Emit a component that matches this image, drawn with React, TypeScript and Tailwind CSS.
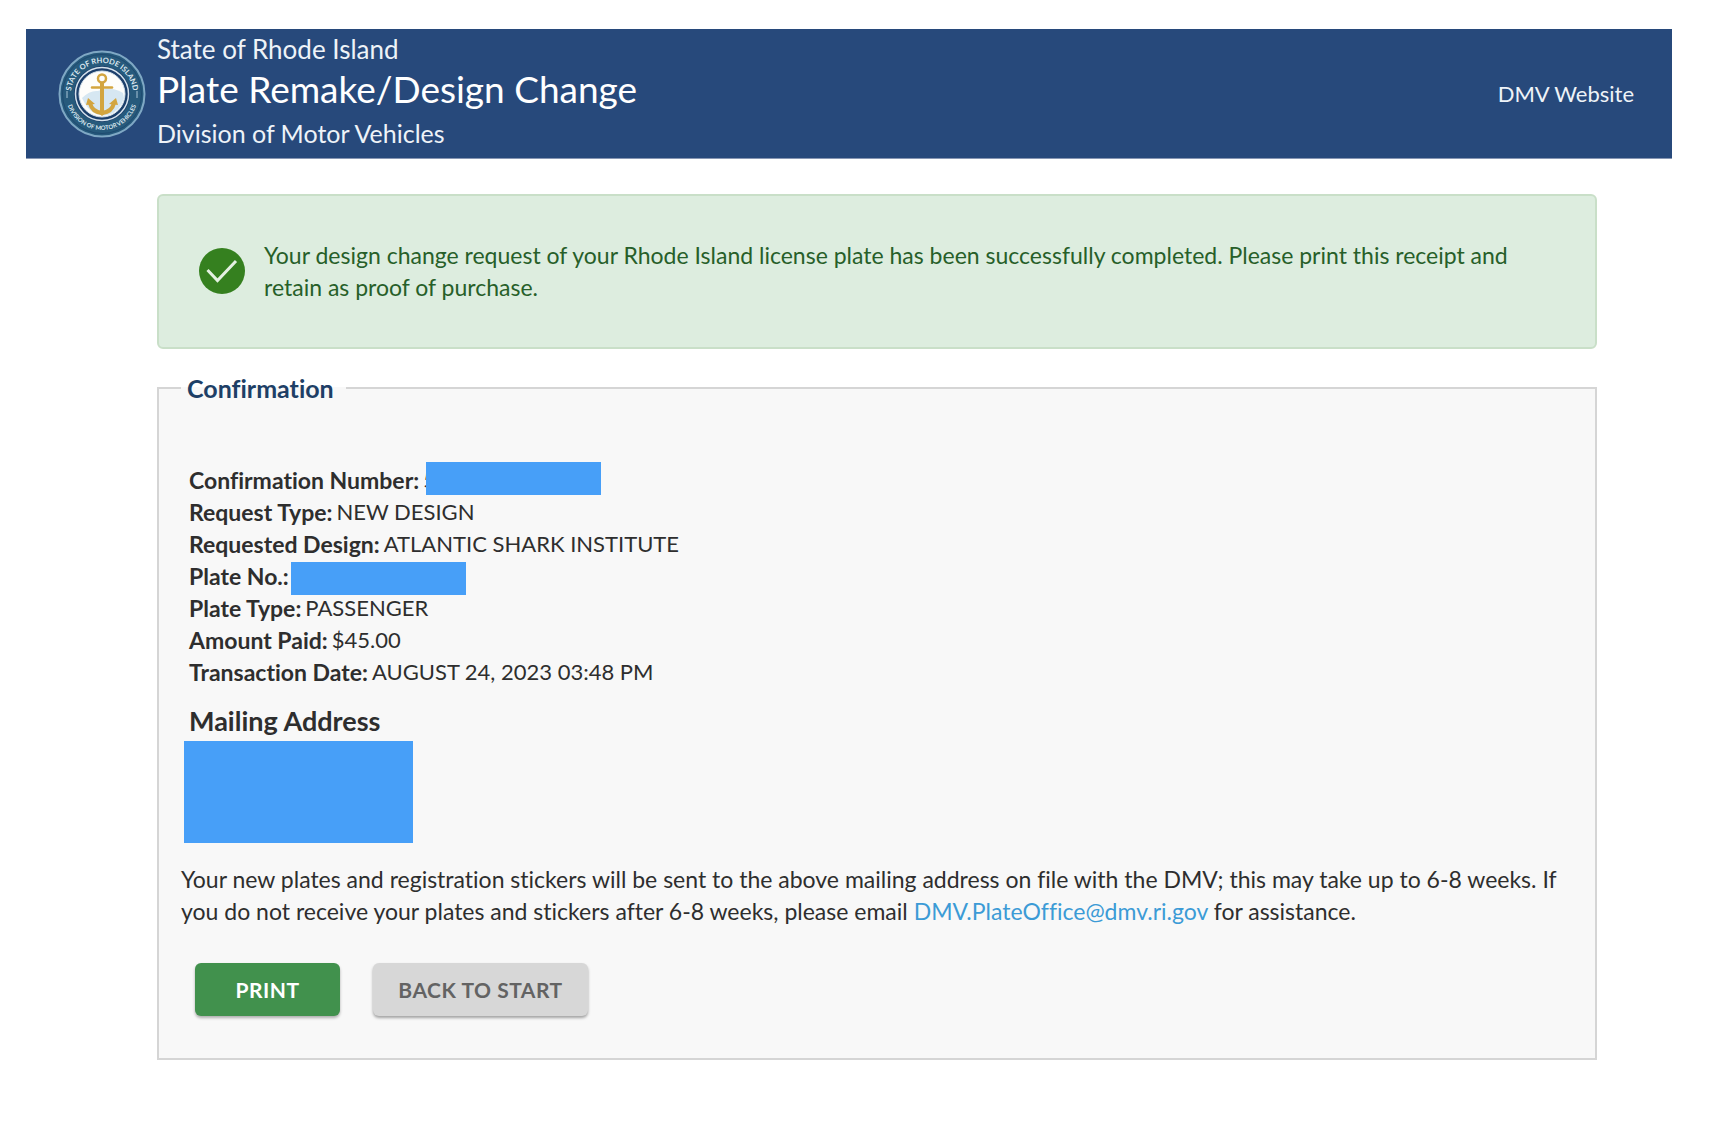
import type { ReactNode } from "react";

const details: { label: string; value: ReactNode }[] = [
  {
    label: "Confirmation Number:",
    value: (
      <>
        5<span className="absolute left-[237px] -top-0.5 h-[33px] w-[175px] bg-[#479ff8]" />
      </>
    ),
  },
  { label: "Request Type:", value: "NEW DESIGN" },
  { label: "Requested Design:", value: "ATLANTIC SHARK INSTITUTE" },
  {
    label: "Plate No.:",
    value: <span className="absolute left-[102px] top-0.5 h-[33px] w-[175px] bg-[#479ff8]" />,
  },
  { label: "Plate Type:", value: "PASSENGER" },
  { label: "Amount Paid:", value: "$45.00" },
  { label: "Transaction Date:", value: "AUGUST 24, 2023 03:48 PM" },
];

function Seal() {
  return (
    <svg viewBox="0 0 88 88" className="size-[88px] shrink-0" role="img" aria-label="Rhode Island DMV seal">
      <defs>
        <path id="seal-top" d="M13 44a31 31 0 0 1 62 0" />
        <path id="seal-bottom" d="M8 44a36 36 0 0 0 72 0" />
      </defs>
      <circle cx="44" cy="44" r="42.500" fill="#275a7c" stroke="#7fa8c4" strokeWidth="2" />
      <circle cx="44" cy="44" r="39.500" fill="none" stroke="#1e4a70" strokeWidth="1" />
      <circle cx="44" cy="44" r="28" fill="#1c3f6b" />
      <circle cx="44" cy="44" r="26.500" fill="none" stroke="#d5e2ec" strokeWidth="1.500" />
      <circle cx="44" cy="44" r="23" fill="#fdfdfb" stroke="#d5e2ec" strokeWidth="1" />
      <path d="M24 48q8-8 16-7 12-6 25 2l1 5q-4 14-16 17-17 3-26-17z" fill="#d6e7f2" />
      <g fill="#dbe7ef" fontFamily="Lato, sans-serif" fontWeight="700" textAnchor="middle">
        <text fontSize="7.500">
          <textPath href="#seal-top" startOffset="50%">STATE OF RHODE ISLAND</textPath>
        </text>
        <text fontSize="6">
          <textPath href="#seal-bottom" startOffset="50%">DIVISION OF MOTOR VEHICLES</textPath>
        </text>
      </g>
      <path d="M9 41v7M79 41v7" stroke="#a9c5d6" strokeWidth="1" />
      <g fill="none" stroke="#d3a53f">
        <circle cx="44" cy="28.500" r="4" strokeWidth="2.500" />
        <path d="M34 37.500h20" strokeWidth="2.500" strokeLinecap="round" />
        <path d="M44 33v29" strokeWidth="4" />
        <path d="M32 53q2 9 12 10 10-1 12-10" strokeWidth="4" />
      </g>
      <path d="M28 55l2-7 7 6zM60 55l-2-7-7 6zM39 62l5 4 5-4z" fill="#d3a53f" />
    </svg>
  );
}

function CheckIcon() {
  return (
    <svg viewBox="0 0 46 46" className="size-[46px] shrink-0" aria-hidden="true">
      <circle cx="23" cy="23" r="23" fill="#35801f" />
      <path d="M8.500 22l10 10.500L37 13" fill="none" stroke="#e4f1e2" strokeWidth="3" />
    </svg>
  );
}

export default function App() {
  return (
    <div className="bg-white pt-[29px] pb-16 pl-[26px] pr-[38px] font-['Lato',sans-serif] text-[23px] leading-8 text-[#2e2e2e] [font-variant-ligatures:none]">
      <header className="flex h-[130px] items-center justify-between border-b border-[#8796b3] bg-[#27497b] pl-8 pr-[38px] text-[#eef3f8]">
        <div className="flex items-center gap-[11px]">
          <Seal />
          <div className="pb-1.5">
            <p className="text-[26px] leading-8">State of Rhode Island</p>
            <h1 className="pt-0.5 pb-1.5 text-[37px] leading-[44px] text-white">Plate Remake/Design Change</h1>
            <p className="text-[25px] leading-8">Division of Motor Vehicles</p>
          </div>
        </div>
        <a href="#dmv" className="text-[22px]">
          DMV Website
        </a>
      </header>

      <main className="ml-[131px] mr-[75px] pt-[35px]">
        <div
          role="status"
          className="flex h-[155px] items-center gap-[19px] rounded-md border-2 border-[#c9dfc8] bg-[#ddeddf] pb-0.5 pl-10 pr-20 text-[#275f29]"
        >
          <CheckIcon />
          <p>
            Your design change request of your Rhode Island license plate has been successfully completed. Please
            print this receipt and retain as proof of purchase.
          </p>
        </div>

        <fieldset className="mt-[23px] border-2 border-[#d5d5d5] bg-[#f8f8f8] px-[22px] pb-[42px]">
          <legend className="pl-1.5 pr-3 text-[25px] font-bold leading-8 text-[#1e3f66]">Confirmation</legend>

          <dl className="mt-[60px] px-2">
            {details.map((item) => (
              <div key={item.label} className="relative flex gap-1">
                <dt className="font-bold">{item.label}</dt>
                <dd className="text-[22px]">{item.value}</dd>
              </div>
            ))}
          </dl>

          <h2 className="mt-[17px] px-2 text-[27px] font-bold leading-8">Mailing Address</h2>
          <div className="ml-[3px] mt-1 h-[102px] w-[229px] bg-[#479ff8]" />

          <p className="mt-5">
            Your new plates and registration stickers will be sent to the above mailing address on file with the DMV;
            this may take up to 6-8 weeks. If you do not receive your plates and stickers after 6-8 weeks, please
            email{" "}
            <a href="mailto:DMV.PlateOffice@dmv.ri.gov" className="text-[#3c9bd6]">
              DMV.PlateOffice@dmv.ri.gov
            </a>{" "}
            for assistance.
          </p>

          <div className="mt-9 flex gap-[33px] pl-[14px] text-[21px] font-bold">
            <button
              type="button"
              className="h-[53px] w-[145px] rounded-md bg-[#41914d] tracking-wide text-white shadow-[0_2px_3px_rgba(0,0,0,0.3)]"
            >
              PRINT
            </button>
            <button
              type="button"
              className="h-[53px] w-[215px] rounded-md bg-[#d7d7d7] tracking-wide text-[#636363] shadow-[0_2px_3px_rgba(0,0,0,0.35)]"
            >
              BACK TO START
            </button>
          </div>
        </fieldset>
      </main>
    </div>
  );
}
